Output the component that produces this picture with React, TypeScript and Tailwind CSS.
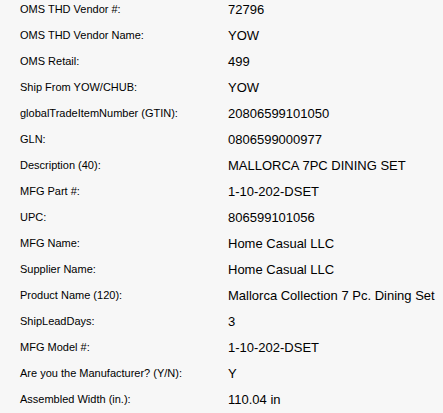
const rows: [string, string][] = [
  ["OMS THD Vendor #:", "72796"],
  ["OMS THD Vendor Name:", "YOW"],
  ["OMS Retail:", "499"],
  ["Ship From YOW/CHUB:", "YOW"],
  ["globalTradeItemNumber (GTIN):", "20806599101050"],
  ["GLN:", "0806599000977"],
  ["Description (40):", "MALLORCA 7PC DINING SET"],
  ["MFG Part #:", "1-10-202-DSET"],
  ["UPC:", "806599101056"],
  ["MFG Name:", "Home Casual LLC"],
  ["Supplier Name:", "Home Casual LLC"],
  ["Product Name (120):", "Mallorca Collection 7 Pc. Dining Set"],
  ["ShipLeadDays:", "3"],
  ["MFG Model #:", "1-10-202-DSET"],
  ["Are you the Manufacturer? (Y/N):", "Y"],
  ["Assembled Width (in.):", "110.04 in"],
]

export default function App() {
  return (
    <div className="min-h-screen w-full bg-[#f7f7f7] text-black font-['Liberation_Sans',Arial,sans-serif] overflow-hidden">
      <div className="pl-[20px]">
        {rows.map(([label, value]) => (
          <div key={label} className="grid grid-cols-[208px_1fr] h-[26px] items-start">
            <div className="pt-[3px] text-[11px] leading-[13px] whitespace-nowrap">{label}</div>
            <div className="pt-[2px] text-[13px] leading-[15px] whitespace-nowrap">{value}</div>
          </div>
        ))}
      </div>
    </div>
  )
}
